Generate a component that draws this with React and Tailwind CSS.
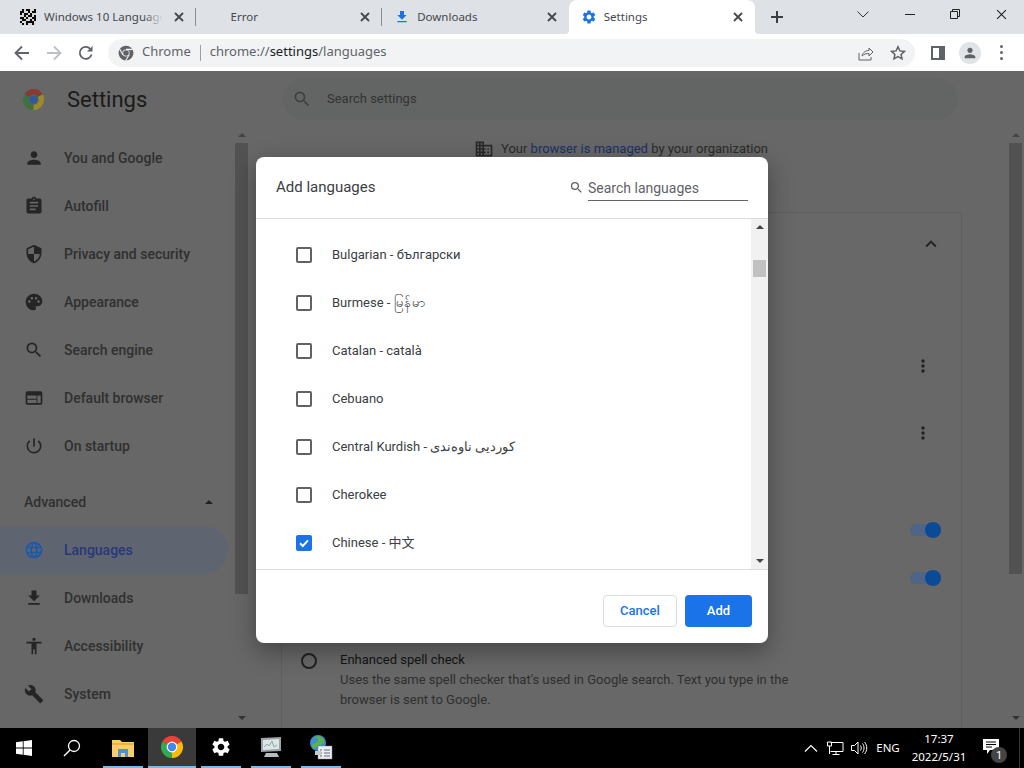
import React from "react";
import {
  MdPerson, MdAssignment, MdSecurity, MdPalette, MdSearch, MdWeb, MdPowerSettingsNew,
  MdLanguage, MdFileDownload, MdAccessibility, MdBuild, MdBusiness, MdMoreVert, MdSettings, MdExpandLess,
} from "react-icons/md";

const X = ({ c = "#45484c", s = 10, w = 1.8 }) => (
  <svg width={s} height={s} viewBox="0 0 10 10"><path d="M1 1l8 8M9 1l-8 8" stroke={c} strokeWidth={w} fill="none" /></svg>
);

const Chrome = ({ s = 24, r = "#ea4335", g = "#34a853", y = "#fbbc05", b = "#4285f4", ring = "#fff", lines }) => (
  <svg width={s} height={s} viewBox="0 0 24 24">
    <path d="M12 12L21.53 6.5A11 11 0 0 0 2.47 6.5Z" fill={r} />
    <path d="M12 12L2.47 6.5A11 11 0 0 0 12 23Z" fill={g} />
    <path d="M12 12L12 23A11 11 0 0 0 21.53 6.5Z" fill={y} />
    {lines && <path d="M12 6.600H22M7.300 14.700L2.300 6M16.700 14.700L11.700 23.400" stroke={lines} strokeWidth="1.600" />}
    <circle cx="12" cy="12" r="5.400" fill={ring} />
    <circle cx="12" cy="12" r="4.200" fill={b} />
  </svg>
);

const Noise = () => {
  const cells = [];
  const pat = [
    "10100110", "00110100", "01001011", "11010010",
    "00101100", "10011010", "01100001", "10101101",
  ];
  pat.forEach((row, j) => [...row].forEach((v, i) => {
    if (v === "1") cells.push(<rect key={i + "-" + j} x={i} y={j} width="1" height="1" fill="#d8d8d8" />);
  }));
  return <svg width="16" height="16" viewBox="0 0 8 8" className="shrink-0"><rect width="8" height="8" fill="#0c0c0c" />{cells}</svg>;
};

const Tab = ({ icon, title, textW, pad, fade, active, sep = true }) => (
  <div className={`relative flex h-[34px] w-[186.6px] shrink-0 items-center ${active ? "rounded-t-lg bg-white" : ""}`}>
    <div className={`flex h-full flex-1 items-center ${pad}`}>
      {icon}
      <div className={`relative overflow-hidden whitespace-nowrap text-[11.5px] text-[#45484c] ${textW}`}>
        {title}
        {fade && <div className="absolute inset-y-0 right-0 w-5 bg-gradient-to-r from-transparent to-[#dee1e6]" />}
      </div>
    </div>
    <div className="mr-[10px] flex w-[12px] justify-center"><X /></div>
    {sep && !active ? <div className="h-[18px] w-px bg-[#8a8d92]" /> : <div className="w-px" />}
    {active && (
      <>
        <svg className="absolute bottom-0 left-[-4px]" width="4" height="4" viewBox="0 0 4 4"><path d="M0 4a4 4 0 0 0 4-4v4z" fill="#fff" /></svg>
        <svg className="absolute bottom-0 right-[-4px]" width="4" height="4" viewBox="0 0 4 4"><path d="M4 4a4 4 0 0 1-4-4v4z" fill="#fff" /></svg>
      </>
    )}
  </div>
);

const Side = ({ Icon, label, active }) => (
  <div className={`flex h-12 items-center ${active ? "mr-[7px] rounded-r-[24px] bg-[#5f6570]" : ""}`}>
    <div className={`ml-[24px] flex w-[20px] justify-center ${active ? "text-[#1c58ab]" : "text-[#252525]"}`}><Icon size={20} /></div>
    <div className={`ml-[20px] text-[14px] font-medium ${active ? "text-[#28377a]" : "text-[#303030]"}`}>{label}</div>
  </div>
);

const Scroll = ({ thumb, className }) => (
  <div className={`flex w-[13px] shrink-0 flex-col items-center ${className}`}>
    <div className="mt-[6px] h-0 w-0 border-x-[4px] border-b-[4px] border-x-transparent border-b-[#444]" />
    <div className={`mt-[6px] w-full bg-[#525252] ${thumb}`} />
    <div className="flex-1" />
    <div className="mb-[8px] h-0 w-0 border-x-[4px] border-t-[4px] border-x-transparent border-t-[#333]" />
  </div>
);

const Toggle = () => (
  <div className="flex h-12 items-center justify-end pr-[20px]">
    <div className="relative h-[12px] w-[31px] rounded-full bg-[#4f6586]">
      <div className="absolute right-0 top-[-2px] h-4 w-4 rounded-full bg-[#0a4a98]" />
    </div>
  </div>
);

const Dots = ({ className }) => (
  <div className={`flex h-12 items-center justify-end pr-[28px] text-[#222] ${className}`}><MdMoreVert size={20} /></div>
);

const langs = [
  "Bulgarian - български",
  "Burmese - မြန်မာ",
  "Catalan - català",
  "Cebuano",
  "Central Kurdish - کوردیی ناوەندی",
  "Cherokee",
  "Chinese - 中文",
];

const Row = ({ label, checked }) => (
  <div className="flex h-12 items-center pl-[40px]">
    {checked ? (
      <div className="flex h-4 w-4 items-center justify-center rounded-[2px] bg-[#1a73e8]">
        <svg width="12" height="12" viewBox="0 0 12 12"><path d="M2 6.200l2.800 2.800L10 3.400" stroke="#fff" strokeWidth="2" fill="none" /></svg>
      </div>
    ) : (
      <div className="h-4 w-4 rounded-[2px] border-2 border-[#5f6368]" />
    )}
    <div className="ml-[20px] whitespace-nowrap text-[13px] text-[#3c4043]">{label}</div>
  </div>
);

const TaskItem = ({ children, w = "w-[40px]", mx = "mx-[5px]", active }) => (
  <div className={`flex h-10 items-center justify-center border-b-2 border-[#76b9ed] ${w} ${mx} ${active ? "bg-[#3a3a3a]" : ""}`}>{children}</div>
);

export default function App() {
  return (
    <div className="relative flex h-[768px] w-[1024px] flex-col overflow-hidden bg-[#666766] font-['Roboto','Noto_Sans_CJK_SC',sans-serif]">
      {/* tab strip */}
      <div className="flex h-[34px] shrink-0 items-center bg-[#dee1e6] pl-[9px] font-['Noto_Sans','Noto_Sans_CJK_SC',sans-serif]">
        <Tab pad="pl-[11px]" icon={<Noise />} title="Windows 10 Language" textW="ml-[8px] w-[119px]" fade />
        <Tab pad="pl-[35px]" title="Error" textW="w-[100px]" />
        <Tab pad="pl-[12px]" icon={<MdFileDownload size={16} className="shrink-0 text-[#1a73e8]" />} title="Downloads" textW="ml-[7px] w-[100px]" sep={false} />
        <Tab active pad="pl-[12px]" icon={<MdSettings size={16} className="shrink-0 text-[#1a73e8]" />} title="Settings" textW="ml-[7px] w-[100px]" />
        <div className="ml-[15px] flex w-[14px] justify-center">
          <svg width="14" height="14" viewBox="0 0 14 14"><path d="M7 1v12M1 7h12" stroke="#3c4043" strokeWidth="2" /></svg>
        </div>
        <div className="mb-[6px] ml-[73px] flex w-[12px] justify-center">
          <svg width="12" height="7" viewBox="0 0 12 7"><path d="M.5.5L6 6l5.500-5.500" stroke="#333" fill="none" /></svg>
        </div>
        <div className="mb-[6px] ml-[36px] h-px w-[10px] bg-[#222]" />
        <div className="mb-[6px] ml-[35px]">
          <svg width="10" height="10" viewBox="0 0 10 10"><path d="M.5 2.500h7v7h-7zM2.500 2.500v-2h7v7h-2" stroke="#222" fill="none" /></svg>
        </div>
        <div className="mb-[6px] ml-[36px]"><X c="#222" s={11} w={1} /></div>
      </div>

      {/* toolbar */}
      <div className="flex h-[37px] shrink-0 items-center bg-white">
        <svg className="ml-[14px]" width="16" height="16" viewBox="0 0 16 16"><path d="M15 8H2M8 1.500L1.500 8 8 14.500" stroke="#5f6368" strokeWidth="1.800" fill="none" /></svg>
        <svg className="ml-[16px]" width="16" height="16" viewBox="0 0 16 16"><path d="M1 8h13M8 1.500L14.500 8 8 14.500" stroke="#bcc0c4" strokeWidth="1.800" fill="none" /></svg>
        <svg className="ml-[16px]" width="16" height="16" viewBox="0 0 16 16"><path d="M13.600 9.500A6 6 0 1 1 12.200 3.800" stroke="#5f6368" strokeWidth="1.800" fill="none" /><path d="M14.500 1v5.500H9z" fill="#5f6368" /></svg>
        <div className="ml-[14px] flex h-[28px] w-[807px] items-center rounded-full bg-[#f1f3f4] font-['Noto_Sans',sans-serif]">
          <div className="ml-[10px]"><Chrome s={16} r="#5f6368" g="#5f6368" y="#5f6368" b="#5f6368" ring="#f1f3f4" lines="#f1f3f4" /></div>
          <div className="mb-px ml-[8px] text-[13px] text-[#5f6368]">Chrome</div>
          <div className="ml-[9px] h-[16px] w-px bg-[#9aa0a6]" />
          <div className="mb-px ml-[9px] text-[13px] text-[#5f6368]">chrome://<span className="text-[#202124]">settings</span>/languages</div>
          <div className="flex-1" />
          <svg className="mr-[16px]" width="16" height="16" viewBox="0 0 16 16"><path d="M1 8v7h12v-3M4 11c1-4 4-5.500 7-5.500V3l4 4-4 4V8.500C8 8.500 6 9 4 11z" stroke="#5f6368" fill="none" /></svg>
          <svg className="mr-[9px]" width="16" height="16" viewBox="0 0 16 16"><path d="M8 1.800l1.900 4.100 4.500.5-3.300 3 .9 4.400L8 11.600l-4 2.200.9-4.400-3.300-3 4.500-.5z" stroke="#5f6368" strokeWidth="1.500" fill="none" /></svg>
        </div>
        <svg className="ml-[16px]" width="14" height="14" viewBox="0 0 14 14"><path d="M0 0h14v14H0z" fill="#5f6368" /><path d="M2 2h6v10H2z" fill="#fff" /></svg>
        <div className="ml-[14px] flex h-[22px] w-[22px] items-center justify-center rounded-full bg-[#e0e3e7] text-[#5f6368]"><MdPerson size={16} /></div>
        <div className="ml-[19px] flex w-[4px] flex-col gap-[3px]">
          <div className="h-[3px] w-[3px] rounded-full bg-[#5f6368]" />
          <div className="h-[3px] w-[3px] rounded-full bg-[#5f6368]" />
          <div className="h-[3px] w-[3px] rounded-full bg-[#5f6368]" />
        </div>
      </div>

      {/* settings page, dimmed */}
      <div className="flex min-h-0 flex-1 flex-col">
        <div className="flex h-[56px] shrink-0 items-center">
          <div className="ml-[22px]"><Chrome s={23} r="#8a3a30" g="#3b7340" y="#9a8a2c" b="#2c5a9c" ring="#5d5f5d" /></div>
          <div className="ml-[22px] w-[216px] text-[22px] text-[#1b1b1b]">Settings</div>
          <div className="flex h-[42px] w-[675px] items-center rounded-full bg-[#636564]">
            <MdSearch size={20} className="ml-[9px] text-[#3f3f3f]" />
            <div className="ml-[15px] text-[13px] text-[#333]">Search settings</div>
          </div>
        </div>
        <div className="flex min-h-0 flex-1">
          <div className="w-[235px] shrink-0 pt-[7px]">
            <Side Icon={MdPerson} label="You and Google" />
            <Side Icon={MdAssignment} label="Autofill" />
            <Side Icon={MdSecurity} label="Privacy and security" />
            <Side Icon={MdPalette} label="Appearance" />
            <Side Icon={MdSearch} label="Search engine" />
            <Side Icon={MdWeb} label="Default browser" />
            <Side Icon={MdPowerSettingsNew} label="On startup" />
            <div className="mt-2 flex h-12 items-center justify-between pl-[24px] pr-[22px]">
              <div className="text-[14px] font-medium text-[#303030]">Advanced</div>
              <div className="h-0 w-0 border-x-[4px] border-b-[4px] border-x-transparent border-b-[#222]" />
            </div>
            <Side Icon={MdLanguage} label="Languages" active />
            <Side Icon={MdFileDownload} label="Downloads" />
            <Side Icon={MdAccessibility} label="Accessibility" />
            <Side Icon={MdBuild} label="System" />
          </div>
          <Scroll thumb="h-[451px]" />
          <div className="min-w-0 flex-1">
            <div className="flex h-[44px] items-center pl-[226px] text-[13px] text-[#2b2b2b]">
              <MdBusiness size={20} className="text-[#2a2a2a]" />
              <div className="ml-[7px] whitespace-nowrap">Your <span className="text-[#1f2f66]">browser is managed</span> by your organization</div>
            </div>
            <div className="ml-[33px] mt-[41px] h-[600px] w-[681px] border border-[#5e5f5e] bg-[#676867] text-[13px]">
              <div className="flex h-[62px] items-center justify-end pr-[19px] text-[#222]"><MdExpandLess size={22} /></div>
              <Dots className="mt-[67px]" />
              <Dots className="mt-[19px]" />
              <div className="mt-[49px]"><Toggle /><Toggle /></div>
              <div className="mt-[48px] flex">
                <div className="ml-[19px] mt-[3px] h-4 w-4 rounded-full border-2 border-[#222]" />
                <div className="ml-[23px] whitespace-nowrap leading-[20px]">
                  <div className="text-[#141414]">Enhanced spell check</div>
                  <div className="text-[#2f2f2f]">Uses the same spell checker that's used in Google search. Text you type in the<br />browser is sent to Google.</div>
                </div>
              </div>
            </div>
          </div>
          <Scroll thumb="h-[431px]" className="mr-[2px]" />
        </div>
      </div>

      {/* taskbar */}
      <div className="flex h-10 shrink-0 items-center bg-black">
        <div className="flex w-[48px] justify-center">
          <svg width="16" height="16" viewBox="0 0 16 16"><path d="M0 2.300l6.800-1v6.300H0zM7.600 1.200L16 0v7.600H7.600zM0 8.400h6.800v6.300l-6.800-1zM7.600 8.400H16V16l-8.400-1.200z" fill="#fff" /></svg>
        </div>
        <div className="flex w-[48px] justify-center">
          <svg width="18" height="18" viewBox="0 0 18 18"><circle cx="11" cy="7" r="5.500" stroke="#fff" strokeWidth="1.300" fill="none" /><path d="M7 11l-6 6" stroke="#fff" strokeWidth="1.500" /></svg>
        </div>
        <TaskItem mx="ml-[7px] mr-[5px]">
          <svg width="22" height="19" viewBox="0 0 22 19"><path d="M0 2h8l2 2h12v15H0z" fill="#f6cf6b" /><path d="M0 5h22v2H0z" fill="#e8b33f" /><path d="M6 11h10v8h-3v-4H9v4H6z" fill="#4f93c9" /></svg>
        </TaskItem>
        <TaskItem w="w-[48px]" mx="" active><Chrome s={24} /></TaskItem>
        <TaskItem><MdSettings size={22} className="text-white" /></TaskItem>
        <TaskItem mx="mx-[5px]">
          <svg width="24" height="22" viewBox="0 0 24 22"><path d="M2 2l20-1v14L2 16z" fill="#9aa3a8" /><path d="M4 4l16-1v10L4 14z" fill="#dfe4e6" /><path d="M5 11l3-3 2 2 3-5 2 6 3-2" stroke="#8aa" fill="none" /><path d="M7 17h11l2 4H5z" fill="#b5bbbe" /></svg>
        </TaskItem>
        <TaskItem mx="mx-[5px]">
          <svg width="24" height="26" viewBox="0 0 24 26"><circle cx="9" cy="9" r="8" fill="#3d8fd0" /><path d="M5 3c4 0 5 3 3 5S3 9 3 12 7 14 9 12s5-1 6-4-3-6-6-6z" fill="#5fb04a" /><rect x="9" y="12" width="14" height="13" fill="#e9eef2" stroke="#888" strokeWidth=".5" /><path d="M11 16h2M15 16h6M11 19h2M15 19h6M11 22h2M15 22h6" stroke="#667" /><path d="M6 17h6v4H6z" fill="#c7ccd0" /></svg>
        </TaskItem>
        <div className="flex-1" />
        <svg width="14" height="8" viewBox="0 0 14 8" className="mr-[9px]"><path d="M1 7.500L7 1.500l6 6" stroke="#fff" strokeWidth="1.200" fill="none" /></svg>
        <svg width="17" height="15" viewBox="0 0 17 15" className="mr-[7px]"><path d="M3.500 1.500H16v9H3.500M.5 1h4v4h-4zM2.500 5v8M9 10.500v3M5.500 13.500h7" stroke="#fff" fill="none" /></svg>
        <svg width="17" height="14" viewBox="0 0 17 14" className="mr-[6px]"><path d="M.5 4.500h3L7 1v12L3.500 9.500h-3zM9.500 4.500c1 1.500 1 3.500 0 5M11.500 2.500c2 2.500 2 6.500 0 9M13.500 1c3 3.500 3 8.500 0 12" stroke="#fff" fill="none" /></svg>
        <div className="w-[28px] text-center font-['Noto_Sans',sans-serif] text-[11.5px] text-white">ENG</div>
        <div className="ml-[3px] w-[68px] text-center font-['Noto_Sans',sans-serif] text-[11.5px] leading-[18px] text-white">
          <div>17:37</div>
          <div>2022/5/31</div>
        </div>
        <div className="relative ml-[10px] mr-[18px] h-[18px] w-[18px]">
          <svg width="17" height="16" viewBox="0 0 17 16"><path d="M0 0h16v11H7l-3 4v-4H0z" fill="#fff" /><path d="M3 3h10M3 5.500h10M3 8h6" stroke="#000" /></svg>
          <div className="absolute left-[8px] top-[8px] flex h-4 w-4 items-center justify-center rounded-full bg-[#444] text-[11px] leading-none text-white">1</div>
        </div>
        <div className="mr-[4px] h-full w-px bg-[#333]" />
      </div>

      {/* dialog */}
      <div className="absolute left-[256px] top-[157px] flex h-[486px] w-[512px] flex-col overflow-hidden rounded-lg bg-white shadow-[0_8px_24px_rgba(0,0,0,0.35)]">
        <div className="flex h-[62px] shrink-0 items-center border-b border-[#dadce0] pl-[20px]">
          <div className="w-[293px] text-[15px] text-[#3c4043]">Add languages</div>
          <MdSearch size={15} className="text-[#5f6368]" />
          <div className="ml-[4px] flex h-[26px] w-[160px] items-center border-b border-[#5f6368] pt-[2px] text-[14px] text-[#5f6368]">Search languages</div>
        </div>
        <div className="flex min-h-0 flex-1">
          <div className="min-w-0 flex-1 overflow-hidden pt-[12px]">
            {langs.map((l, i) => <Row key={l} label={l} checked={i === 6} />)}
          </div>
          <div className="flex w-[17px] shrink-0 flex-col items-center bg-[#f1f1f1]">
            <div className="mt-[6px] h-0 w-0 border-x-[4px] border-b-[4px] border-x-transparent border-b-[#444]" />
            <div className="mt-[31px] h-[17px] w-[13px] bg-[#c1c1c1]" />
            <div className="flex-1" />
            <div className="mb-[6px] h-0 w-0 border-x-[4px] border-t-[4px] border-x-transparent border-t-[#444]" />
          </div>
        </div>
        <div className="flex h-[74px] shrink-0 items-start justify-end gap-2 border-t border-[#dadce0] pr-4 pt-[25px]">
          <div className="flex h-8 w-[74px] items-center justify-center rounded border border-[#dadce0] bg-white text-[13px] font-medium text-[#1a73e8]">Cancel</div>
          <div className="flex h-8 w-[67px] items-center justify-center rounded bg-[#1a73e8] text-[13px] font-medium text-white">Add</div>
        </div>
      </div>
    </div>
  );
}
